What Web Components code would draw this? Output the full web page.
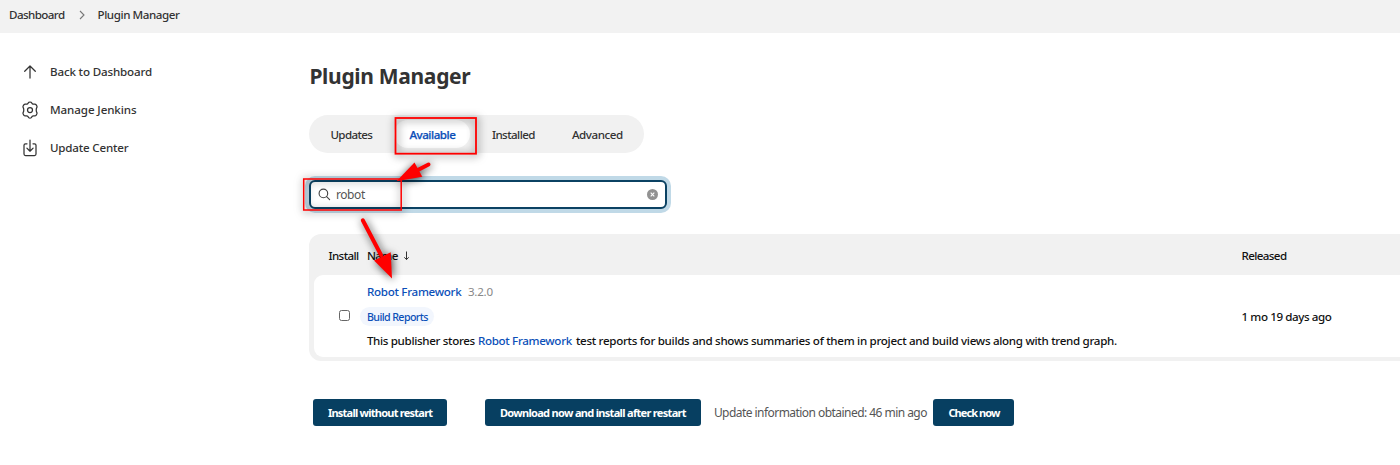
<!DOCTYPE html>
<html lang="en">
<head>
<meta charset="utf-8">
<title>Plugin Manager</title>
<style>
html,body{margin:0;height:100%;overflow:hidden;background:#fff}
body{font:500 11.6px/18px "Noto Sans","Open Sans",sans-serif;color:#333}
</style>
</head>
<body>
<jenkins-page></jenkins-page>
<script>
const define = (name, html, ready) => customElements.define(name, class extends HTMLElement {
  connectedCallback() {
    if (this.shadowRoot) return;
    const t = document.createElement('template');
    t.innerHTML = html;
    this.attachShadow({mode: 'open'}).append(t.content.cloneNode(true));
    if (ready) ready(this, this.shadowRoot);
  }
});

// Text label that tracks its letters to fill the width given in the w attribute
define('ui-text', `<style>:host{display:inline-block;white-space:nowrap;flex:none}span{display:inline-block}</style><span><slot></slot></span>`,
  (el, root) => {
    const w = +el.getAttribute('w'), s = root.querySelector('span');
    const n = el.textContent.length, natural = s.getBoundingClientRect().width;
    s.style.letterSpacing = ((w - natural) / n).toFixed(4) + 'px';
    el.style.width = w + 'px';
  });

define('bread-crumbs', `<style>
:host{display:flex;align-items:center;height:33px;background:#f2f2f2;padding:0 0 3px 9px;box-sizing:border-box}
svg{margin:0 13px 1px 14px}</style>
<ui-text w="55.5">Dashboard</ui-text>
<svg width="6" height="10" viewBox="0 0 6 10" fill="none" stroke="#777" stroke-width="1.1"><path d="M1 1l4 4-4 4"/></svg>
<ui-text w="82">Plugin Manager</ui-text>`);

define('side-link', `<style>:host{display:flex;align-items:center;gap:11.5px;height:38px}::slotted(svg){width:18px;height:18px;flex:none;fill:none;stroke:#333;stroke-width:1.25;stroke-linecap:round;stroke-linejoin:round}</style><slot name="icon"></slot><slot></slot>`);

define('side-nav', `<style>:host{display:block;padding:20px 0 0 20.5px;box-sizing:border-box}</style>
<side-link><svg slot="icon" viewBox="0 0 18 18"><path d="M9 15V3.2M3.7 8.3L9 3l5.3 5.3"/></svg><ui-text w="102">Back to Dashboard</ui-text></side-link>
<side-link><svg slot="icon" viewBox="0 0 18 18"><path d="M6.5 2.9Q7.2 2.5 7.4 1.7Q7.6 1 9 1T10.6 1.7Q10.8 2.5 11.5 2.9Q12.3 3.4 13.3 3.1Q14.5 2.8 15.4 4.2T16 6.2Q15.2 7.4 15.2 9T16 11.8Q16.3 12.4 15.4 13.8T13.3 14.9Q12.3 14.6 11.5 15.1Q10.8 15.5 10.6 16.3Q10.4 17 9 17T7.4 16.3Q7.2 15.5 6.5 15.1Q5.7 14.6 4.7 14.9Q3.5 15.2 2.6 13.8T2 11.8Q2.8 10.6 2.8 9T2 6.2Q1.7 5.6 2.6 4.2T4.7 3.1Q5.7 3.4 6.5 2.9Z"/><circle cx="9" cy="9" r="2.5"/></svg><ui-text w="86.5">Manage Jenkins</ui-text></side-link>
<side-link><svg slot="icon" viewBox="0 0 18 18"><path d="M6 4.8H4.5Q3 4.8 3 6.3V15Q3 16.5 4.5 16.5H13.5Q15 16.5 15 15V6.3Q15 4.8 13.5 4.8H12M9 1V12M5.9 9.1L9 12.2l3.1-3.1"/></svg><ui-text w="78.5">Update Center</ui-text></side-link>`);

define('tab-bar', `<style>
:host{display:flex;align-items:center;width:334.5px;height:38px;border-radius:19px;background:#f1f1f1;box-sizing:border-box;padding:0 6px 0 21px}
ui-text{padding-top:2px}
.on{display:flex;align-items:center;height:28px;margin:0 21.5px 0 22px;padding:0 15px;border-radius:14px;background:#fff;color:#0b4fb8}
.last{margin-left:37px}
.on ui-text{-webkit-text-stroke:.25px #0b4fb8}</style>
<ui-text w="42">Updates</ui-text><div class="on"><ui-text w="46">Available</ui-text></div><ui-text w="43">Installed</ui-text><ui-text class="last" w="51">Advanced</ui-text>`);

define('search-box', `<style>
:host{display:flex;align-items:center;box-sizing:border-box;width:357.5px;height:29px;border:2px solid #0b4263;border-radius:6px;box-shadow:0 0 0 4px #c0d9e7;background:#fff;padding:0 7px 0 6.5px;font-size:12px;font-weight:400;color:#555}
ui-text{margin-left:5px}.clear{margin-left:auto}</style>
<svg width="13" height="13" viewBox="0 0 13 13" fill="none" stroke="#444" stroke-width="1.15" stroke-linecap="round"><circle cx="5.4" cy="5.4" r="4.3"/><path d="M8.6 8.6l3 3"/></svg>
<ui-text w="29">robot</ui-text>
<svg class="clear" width="11" height="11" viewBox="0 0 11 11"><circle cx="5.5" cy="5.5" r="5.5" fill="#929292"/><path d="M3.7 3.7l3.6 3.6M7.3 3.7L3.7 7.3" stroke="#fff" stroke-width="1.1"/></svg>`);

define('plugin-row', `<style>
:host{display:grid;grid-template-columns:53px 874.6px auto;height:82px;background:#fff;border-radius:9px 0 0 9px;align-items:center;color:#111}
.box{width:9px;height:9px;border:1px solid #666;border-radius:2.5px;margin-left:25px;margin-bottom:2px}
.info{display:flex;flex-direction:column;align-items:flex-start}
.line{display:flex;height:18px;align-items:center}
.link{color:#0b4fb8}.version{color:#888;margin-left:6.5px;font-weight:400}
.tag{display:flex;align-items:center;height:19px;border-radius:10px;background:#f2f6fd;color:#0b4fb8;padding:0 6px 0 7px;margin:6px 0 6px -7px;font-size:10.7px}
.tag ui-text{padding-top:1px}
.desc .link{margin:0 4px 0 3px}.age{padding-top:2px}</style>
<div class="box"></div>
<div class="info"><div class="line"><ui-text class="link" w="94.5">Robot Framework</ui-text><ui-text class="version" w="25">3.2.0</ui-text></div>
<div class="tag"><ui-text w="61">Build Reports</ui-text></div>
<div class="line desc"><ui-text w="108">This publisher stores</ui-text><ui-text class="link" w="94">Robot Framework</ui-text><ui-text w="541">test reports for builds and shows summaries of them in project and build views along with trend graph.</ui-text></div></div>
<ui-text class="age" w="90">1 mo 19 days ago</ui-text>`);

define('plugin-table', `<style>
:host{display:block;height:127px;border-radius:12px 0 0 12px;background:#f1f1f1;box-sizing:border-box;padding-left:4.5px}
.head{display:grid;grid-template-columns:38.4px 874.6px auto;height:41px;align-items:center;padding:3px 0 0 14.6px;box-sizing:border-box;color:#111}
.name{display:flex;align-items:center;gap:5px}</style>
<div class="head"><ui-text w="30">Install</ui-text><div class="name"><ui-text w="31">Name</ui-text><svg width="7" height="10" viewBox="0 0 7 10" fill="none" stroke="#333"><path d="M3.5 0.5v8M1.3 6.3l2.2 2.3 2.2-2.3"/></svg></div><ui-text w="45">Released</ui-text></div>
<plugin-row></plugin-row>`);

define('push-button', `<style>:host{display:flex;align-items:center;justify-content:center;height:27px;border-radius:3px;background:#073f61;color:#fff;font:700 11px/18px "Noto Sans",sans-serif;padding:1px 15px 0;box-sizing:border-box;flex:none}</style><slot></slot>`);

define('action-bar', `<style>:host{display:flex;align-items:center;padding-left:3.5px}.second{margin-left:37.5px}.info{font-size:12px;font-weight:400;color:#555;margin:0 6.5px 0 13px}</style>
<push-button><ui-text w="104.5">Install without restart</ui-text></push-button>
<push-button class="second"><ui-text w="186">Download now and install after restart</ui-text></push-button>
<ui-text class="info" w="213">Update information obtained: 46 min ago</ui-text>
<push-button><ui-text w="51">Check now</ui-text></push-button>`);

define('callout-marks', `<style>:host{position:absolute;inset:0;pointer-events:none}svg{display:block;filter:drop-shadow(1px 1px 4px rgba(0,0,0,.75))}</style>
<svg width="1400" height="465" fill="none" stroke="#f00">
<rect x="395.5" y="118" width="80.5" height="35.7" stroke-width="1.8"/>
<rect x="303.7" y="179" width="97.5" height="31" stroke-width="1.5"/>
<g fill="#f00" stroke-linecap="round"><path d="M428.5 164.5L414 172" stroke-width="4"/><path stroke="none" d="M396.5 181.2L414.5 162.5L422.3 176.8Z"/>
<path d="M362.8 220.3L381 255" stroke-width="4"/><path stroke="none" d="M392 278.5L374 260.5L390.7 252.3Z"/></g></svg>`);

define('jenkins-page', `<style>
:host{display:block;position:relative;width:1400px;height:465px;overflow:hidden}
.body{display:grid;grid-template-columns:309.4px minmax(0,1fr)}
main{padding-top:28px}
h1{margin:0;height:30px;font-size:21px;line-height:30px;font-weight:700;color:#333}
tab-bar{margin-top:24px}search-box{margin-top:27px}plugin-table{margin-top:25px}action-bar{margin-top:38px}</style>
<bread-crumbs></bread-crumbs>
<div class="body"><side-nav></side-nav><main><h1><ui-text w="161">Plugin Manager</ui-text></h1><tab-bar></tab-bar><search-box></search-box><plugin-table></plugin-table><action-bar></action-bar></main></div>
<callout-marks></callout-marks>`);
</script>
</body>
</html>
